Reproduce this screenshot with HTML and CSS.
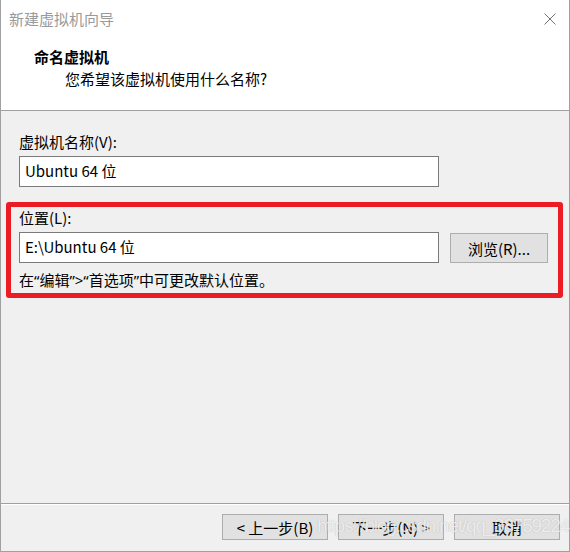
FILE: index.html
```html
<!DOCTYPE html>
<html lang="zh-CN">
<head>
  <meta charset="UTF-8" />
  <meta name="viewport" content="width=device-width, initial-scale=1.0"/>
  <title>新建虚拟机向导</title>
  <link rel="stylesheet" href="styles.css">
</head>
<body>

<div class="dialog">
  <div class="titlebar">
    <span class="title">新建虚拟机向导</span>
    <svg class="close" width="12" height="12" viewBox="0 0 12 12">
      <path d="M0.5 0.5 L11.5 11.5 M11.5 0.5 L0.5 11.5" stroke="#707070" stroke-width="1" fill="none"/>
    </svg>
  </div>

  <header class="wizard-head">
    <div class="heading">命名虚拟机</div>
    <div class="subheading">您希望该虚拟机使用什么名称?</div>
  </header>

  <main class="content">
    <div class="field">
      <label class="label" for="vmName">虚拟机名称(V):</label>
      <input class="text-box" id="vmName" type="text" value="Ubuntu 64 位" readonly>
    </div>

    <div class="location">
      <label class="label" for="vmPath">位置(L):</label>
      <div class="path-row">
        <input class="text-box" id="vmPath" type="text" value="E:\Ubuntu 64 位" readonly>
        <button class="btn browse">浏览(R)...</button>
      </div>
      <div class="hint">在“编辑”&gt;“首选项”中可更改默认位置。</div>
    </div>
  </main>

  <footer class="actions">
    <button class="btn">&lt; 上一步(B)</button>
    <button class="btn">下一步(N) &gt;</button>
    <button class="btn">取消</button>
    <span class="watermark">https://blog.csdn.net/qq_38759224</span>
  </footer>
</div>

</body>
</html>
```

FILE: styles.css
```css
* {
  box-sizing: border-box;
}

body {
  margin: 0;
  background: #f0f0f0;
  font-family: "Noto Sans CJK SC", "Noto Sans", sans-serif;
  font-size: 15px;
  color: #000;
}

.dialog {
  position: relative;
  width: 570px;
  height: 552px;
  display: flex;
  flex-direction: column;
  background: #f0f0f0;
  border: 1px solid #a0a0a0;
  border-top: none;
}

.titlebar {
  height: 38px;
  display: flex;
  align-items: center;
  justify-content: space-between;
  padding: 0 13px 0 8px;
  background: #fff;
}

.title {
  color: #9a9a9a;
  line-height: 20px;
}

.wizard-head {
  background: #fff;
  padding: 8px 0 20px 33px;
  border-bottom: 1px solid #a0a0a0;
}

.heading {
  font-weight: bold;
  line-height: 22px;
}

.subheading {
  line-height: 22px;
  padding-left: 31px;
}

.content {
  flex: 1;
  padding: 21px 6px 0 5px;
}

.field {
  padding: 0 0 0 13px;
}

.label {
  display: block;
  line-height: 20px;
  margin-bottom: 4px;
}

.text-box {
  display: block;
  width: 420px;
  height: 31px;
  margin: 0;
  padding: 0 5px 2px;
  border: 1px solid #7a7a7a;
  border-radius: 0;
  background: #fff;
  font: inherit;
  color: #000;
  outline: none;
}

.location {
  margin-top: 15px;
  padding: 1px 9px 3px 8px;
  border: 5px solid #ec1c24;
  border-radius: 3px;
}

.path-row {
  display: flex;
  align-items: flex-start;
  gap: 11px;
}

.hint {
  margin-top: 7px;
  line-height: 20px;
  font-family: "Noto Sans", "Noto Sans CJK SC", sans-serif;
}

.btn {
  width: 106px;
  height: 26px;
  margin: 0;
  padding: 0;
  border: 1px solid #adadad;
  background: #e1e1e1;
  font: inherit;
  color: #000;
  cursor: pointer;
}

.browse {
  width: 98px;
  height: 30px;
  margin-top: 1px;
}

.actions {
  position: relative;
  height: 48px;
  display: flex;
  justify-content: flex-end;
  gap: 10px;
  padding: 10px 9px 0 0;
  border-top: 1px solid #a0a0a0;
  box-shadow: inset 0 1px 0 #fff;
}

.watermark {
  position: absolute;
  left: 316px;
  top: 11px;
  font-family: "Liberation Sans", Arial, sans-serif;
  font-size: 19px;
  letter-spacing: -1.2px;
  line-height: 22px;
  color: rgba(255, 255, 255, 0.75);
  text-shadow: 0 0 1px rgba(110, 110, 110, 0.45);
  pointer-events: none;
}
```
